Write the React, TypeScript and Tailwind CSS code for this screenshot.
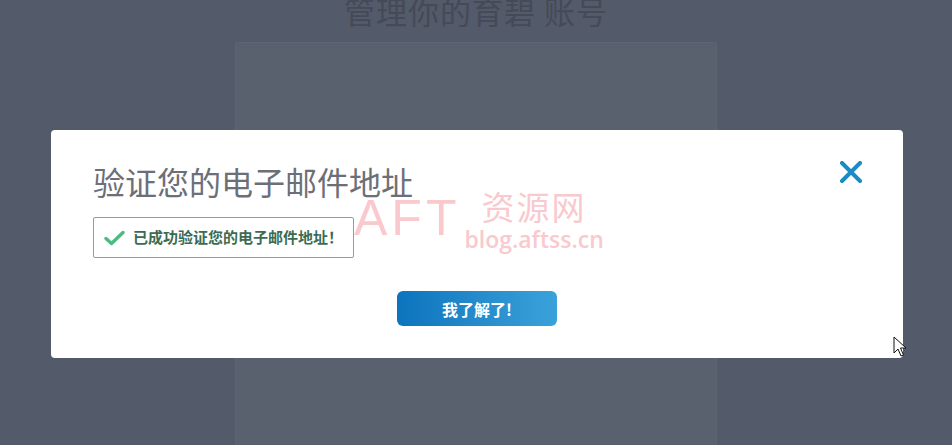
import React from "react";

const cjk = { fontFamily: '"Noto Sans CJK SC", "Noto Sans", sans-serif' };

function CheckIcon() {
  return (
    <svg width="21" height="16" viewBox="0 0 21 16" fill="none">
      <path d="M2 8.5 L7.5 13.5 L19 2.5" stroke="#4fb883" strokeWidth="3.4" strokeLinecap="round" strokeLinejoin="round" />
    </svg>
  );
}

function CloseIcon() {
  return (
    <svg width="24" height="22" viewBox="0 0 24 22" fill="none">
      <path d="M3 2 L21 20 M21 2 L3 20" stroke="#1a8bc5" strokeWidth="4" strokeLinecap="round" />
    </svg>
  );
}

function Cursor() {
  return (
    <svg width="14" height="22" viewBox="0 0 14 22">
      <path d="M1 1 L1 17 L5 13 L8 20 L10.5 19 L7.5 12 L13 12 Z" fill="#fff" stroke="#111" strokeWidth="1" strokeLinejoin="round" />
    </svg>
  );
}

export default function App() {
  return (
    <div className="relative h-[445px] w-[952px] overflow-hidden bg-[#535a6a]" style={cjk}>
      {/* page behind the overlay */}
      <div className="flex flex-col items-center">
        <h1 className="-mt-[9px] text-[31px] leading-[40px] tracking-[1px] text-[#444a57]">管理你的育碧 账号</h1>
        <div className="mt-[11px] h-[420px] w-[482px] rounded-[3px] border border-[#5e6572] bg-[#5a616e]" />
      </div>

      {/* modal */}
      <div className="absolute left-[51px] top-[130px] h-[228px] w-[852px] rounded-[4px] bg-white">
        <div className="flex items-start justify-between pl-[42px] pr-[40px] pt-[30px]">
          <h2 className="text-[32px] leading-[42px] text-[#6d6f78]">验证您的电子邮件地址</h2>
          <button type="button" className="mt-[1px]">
            <CloseIcon />
          </button>
        </div>
        <div className="ml-[42px] mt-[15px] flex h-[41px] w-[261px] items-center gap-[8px] rounded-[2px] border border-solid border-[#5fba8d] pl-[10px]">
          <CheckIcon />
          <span className="text-[15px] font-bold text-[#3b6b53]">已成功验证您的电子邮件地址！</span>
        </div>
        <div className="mt-[33px] flex justify-center">
          <button
            type="button"
            className="h-[35px] w-[160px] rounded-[6px] bg-gradient-to-r from-[#0b74bd] to-[#3aa2da] text-[16px] font-bold text-white"
          >
            我了解了!
          </button>
        </div>
      </div>

      {/* watermark */}
      <div className="pointer-events-none absolute left-[354px] top-[188px] flex items-start text-[#f7b8be] opacity-75">
        <span className="text-[50px] font-light leading-[60px] tracking-[4px]" style={{ fontFamily: '"Liberation Sans", sans-serif' }}>
          AFT
        </span>
        <div className="ml-[4px] flex flex-col items-center">
          <span className="-mt-[2px] text-[33px] leading-[40px] tracking-[2px]">资源网</span>
          <span className="text-[23px] font-semibold leading-[26px]" style={{ fontFamily: '"Open Sans", sans-serif' }}>
            blog.aftss.cn
          </span>
        </div>
      </div>

      {/* mouse pointer */}
      <div className="pointer-events-none absolute left-[893px] top-[336px]">
        <Cursor />
      </div>
    </div>
  );
}
